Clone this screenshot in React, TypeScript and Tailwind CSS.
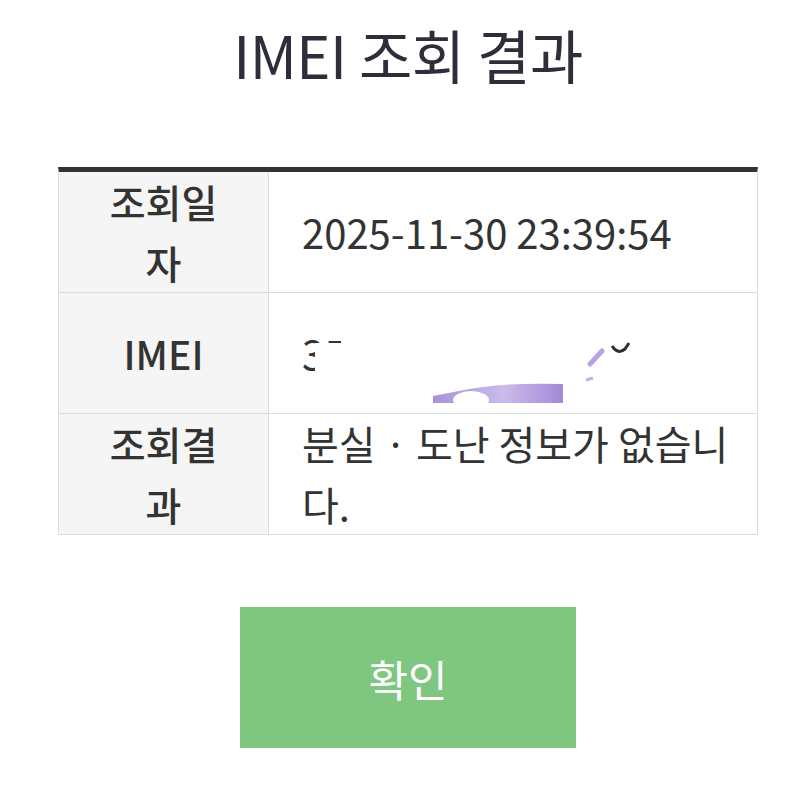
import React from "react";

export default function App() {
  return (
    <div className="w-[800px] h-[800px] bg-white flex flex-col items-center pl-[16px] font-['Noto_Sans_CJK_KR','Noto_Sans',sans-serif] text-[#333]">
      <h1 className="mt-[20px] text-[58px] leading-[68px] font-normal text-[#2c2e3a] tracking-[-0.5px]">
        IMEI 조회 결과
      </h1>
      <div className="mt-[79px] w-[700px] border-t-[5px] border-[#333] border-x border-x-[#dcdcdc] grid grid-cols-[210px_1fr]">
        <div className="h-[121px] bg-[#f5f5f5] border-b border-r border-[#dcdcdc] flex items-center justify-center text-center text-[39px] leading-[61px] font-medium">
          <span>
            조회일
            <br />자
          </span>
        </div>
        <div className="h-[121px] border-b border-[#dcdcdc] flex items-center pl-[33px] text-[40px] leading-[61px]">
          2025-11-30 23:39:54
        </div>

        <div className="h-[121px] bg-[#f5f5f5] border-b border-r border-[#dcdcdc] flex items-center justify-center text-[39px] leading-[61px] font-medium">
          IMEI
        </div>
        <div className="relative h-[121px] border-b border-[#dcdcdc] flex items-center pl-[33px] text-[40px] leading-[61px] overflow-hidden">
          <span>35</span>
          <div className="absolute left-[46px] top-[50px] w-[80px] h-[50px] bg-white" />
          <div className="absolute left-[72px] top-[20px] w-[120px] h-[80px] bg-white" />
          <div className="absolute left-[50px] top-[56px] w-[12px] h-[8px] bg-white" />
          <svg
            className="absolute left-0 top-0"
            width="489"
            height="121"
            viewBox="0 0 489 121"
          >
            <defs>
              <linearGradient id="pg" x1="0" x2="1" y1="0" y2="0">
                <stop offset="0" stopColor="#a892d8" />
                <stop offset="0.55" stopColor="#cbbbeb" />
                <stop offset="1" stopColor="#a488d6" />
              </linearGradient>
            </defs>
            <path d="M164,103 L190,98 Q232,89 294,91 L294,110 L164,110 Z" fill="url(#pg)" />
            <ellipse cx="202" cy="107" rx="18" ry="9" fill="#ffffff" />
            <line x1="321" y1="71" x2="333" y2="58" stroke="#b9a2e3" strokeWidth="5" strokeLinecap="round" />
            <line x1="317" y1="87" x2="324" y2="85" stroke="#c3b1e8" strokeWidth="3" />
            <path d="M343,53 Q349,62 356,56 L360,50" fill="none" stroke="#2f2f2f" strokeWidth="3" />
          </svg>
        </div>

        <div className="h-[121px] bg-[#f5f5f5] border-b border-r border-[#dcdcdc] flex items-center justify-center text-center text-[39px] leading-[61px] font-medium">
          <span>
            조회결
            <br />과
          </span>
        </div>
        <div className="h-[121px] border-b border-[#dcdcdc] flex items-center pl-[33px] pr-[16px] text-[40px] leading-[61px]">
          <span>
            분실 · 도난 정보가 없습니
            <br />
            다.
          </span>
        </div>
      </div>
      <button className="mt-[72px] w-[336px] h-[141px] bg-[#7fc681] text-white text-[43px] leading-[50px]">
        확인
      </button>
    </div>
  );
}
